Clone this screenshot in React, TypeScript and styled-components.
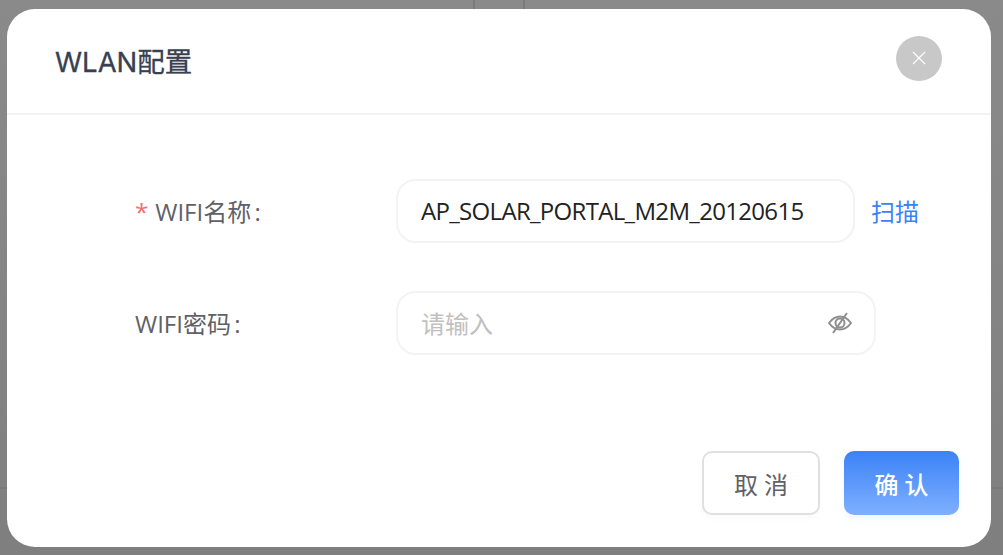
import React from "react";
import styled, { createGlobalStyle } from "styled-components";

const Global = createGlobalStyle`
  html, body { margin: 0; padding: 0; width: 1003px; height: 555px; overflow: hidden; background: #858585; }
  * { box-sizing: border-box; }
`;

const fonts = `"Open Sans", "Noto Sans CJK SC", sans-serif`;

const Backdrop = styled.div`
  position: relative;
  width: 1003px;
  height: 555px;
  padding: 9px 12px 8px 7px;
  background: linear-gradient(180deg, #8a8a8a 0%, #7f7f7f 100%);
  font-family: ${fonts};
`;

const BackLine = styled.i<{ $x?: number; $y?: number }>`
  position: absolute;
  background: #7a7a7a;
  ${(p) =>
    p.$x !== undefined
      ? `left:${p.$x}px;top:0;width:2px;height:9px;`
      : `left:0;top:${p.$y}px;width:1003px;height:2px;`}
`;

const Modal = styled.div`
  position: relative;
  height: 538px;
  background: #fff;
  border-radius: 28px;
  display: flex;
  flex-direction: column;
`;

const Header = styled.header`
  height: 106px;
  flex: none;
  padding: 0 49px 0 48px;
  border-bottom: 2px solid #f3f3f4;
  display: flex;
  align-items: center;
  justify-content: space-between;
`;

const Title = styled.h2`
  margin: 4px 0 0;
  font-family: Inter, "Noto Sans CJK SC", sans-serif;
  font-size: 27.5px;
  font-weight: 400;
  color: #374151;
  line-height: 1;
  -webkit-text-stroke: 0.3px #374151;
`;

const Close = styled.button`
  width: 46px;
  height: 45px;
  margin-top: -6px;
  border: none;
  border-radius: 50%;
  background: #c8c8c8;
  padding: 0;
  display: flex;
  align-items: center;
  justify-content: center;
`;

const Form = styled.form`
  flex: 1;
  padding: 64px 0 0 128px;
  display: flex;
  flex-direction: column;
  gap: 48px;
`;

const Row = styled.div`
  display: flex;
  align-items: center;
  height: 64px;
`;

const Label = styled.label`
  width: 261px;
  flex: none;
  font-size: 24px;
  color: #5f6166;
  white-space: nowrap;
  position: relative;
  top: -1px;
  word-spacing: -3px;
`;

const Star = styled.span`
  color: #f56c6c;
  margin-right: 7px;
  font-size: 24px;
`;

const InputBox = styled.div<{ $w: number }>`
  width: ${(p) => p.$w}px;
  height: 64px;
  border: 2px solid #f3f3f4;
  border-radius: 20px;
  padding: 0 22px 0 23px;
  font-size: 24px;
  display: flex;
  align-items: center;
  justify-content: space-between;
  color: #222;
`;

const Value = styled.span`
  letter-spacing: -0.68px;
  position: relative;
  top: -1px;
`;

const Placeholder = styled.span`
  color: #c0c0c0;
  position: relative;
  top: -1px;
`;

const Scan = styled.a`
  margin-left: 16px;
  font-size: 24px;
  color: #3b82f6;
  position: relative;
  top: -1px;
`;

const Footer = styled.footer`
  padding: 0 32px 32px 0;
  display: flex;
  justify-content: flex-end;
  gap: 24px;
`;

const Button = styled.button<{ $primary?: boolean }>`
  height: 64px;
  width: ${(p) => (p.$primary ? 115 : 118)}px;
  border-radius: 10px;
  font-family: ${fonts};
  font-size: 24px;
  font-weight: ${(p) => (p.$primary ? 500 : 400)};
  letter-spacing: 1px;
  word-spacing: -2px;
  padding: 0 0 0 1px;
  border: ${(p) => (p.$primary ? "none" : "2px solid #e0e0e0")};
  color: ${(p) => (p.$primary ? "#fff" : "#5f6166")};
  background: ${(p) => (p.$primary ? "linear-gradient(180deg, #3b82f6 0%, #7fb0ff 100%)" : "#fff")};
  box-shadow: 0 4px 6px ${(p) => (p.$primary ? "rgba(59,130,246,0.06)" : "rgba(0,0,0,0.02)")};
`;

export default function App() {
  return (
    <Backdrop>
      <Global />
      <BackLine $x={473} />
      <BackLine $x={523} />
      <BackLine $y={487} />
      <Modal>
        <Header>
          <Title>WLAN配置</Title>
          <Close aria-label="close">
            <svg width="16" height="16" viewBox="0 0 16 16" fill="none" stroke="#fff" strokeWidth="1.1">
              <path d="M2 2l12 12M14 2L2 14" />
            </svg>
          </Close>
        </Header>
        <Form>
          <Row>
            <Label>
              <Star>*</Star>WIFI名称 :
            </Label>
            <InputBox $w={459}>
              <Value>AP_SOLAR_PORTAL_M2M_20120615</Value>
            </InputBox>
            <Scan>扫描</Scan>
          </Row>
          <Row>
            <Label>WIFI密码 :</Label>
            <InputBox $w={480}>
              <Placeholder>请输入</Placeholder>
              <svg width="24" height="24" viewBox="0 0 24 24" fill="none" stroke="#8f8f8f" strokeWidth="2">
                <path d="M1 12c3-4.200 6.800-6.500 11-6.500S20 7.800 23 12c-3 4.200-6.800 6.500-11 6.500S4 16.200 1 12z" />
                <circle cx="12" cy="12" r="4.500" />
                <path d="M19 2L5 22" />
              </svg>
            </InputBox>
          </Row>
        </Form>
        <Footer>
          <Button type="button">取 消</Button>
          <Button type="button" $primary>确 认</Button>
        </Footer>
      </Modal>
    </Backdrop>
  );
}
